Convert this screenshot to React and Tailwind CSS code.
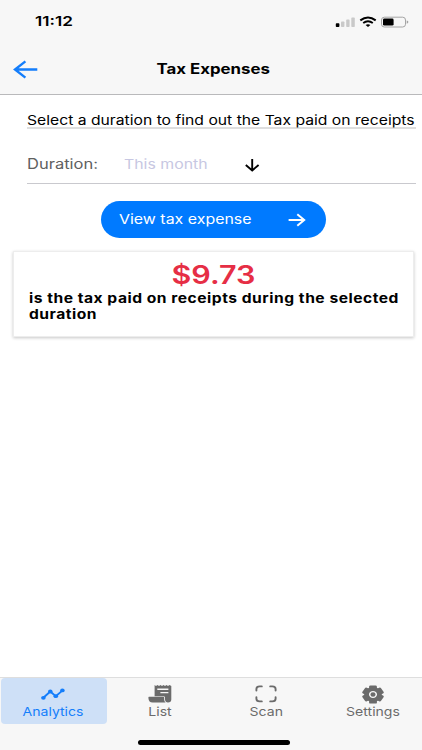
function StatusIcons() {
  return (
    <svg width="74" height="14" viewBox="0 0 74 14" fill="none">
      <rect x="0.8" y="8.2" width="3.6" height="3.8" rx="0.8" fill="#000" />
      <rect x="6" y="6.4" width="3.4" height="5.6" rx="0.8" fill="#c9c9c9" />
      <rect x="11.2" y="4.6" width="3.4" height="7.4" rx="0.8" fill="#c9c9c9" />
      <rect x="16.3" y="2.6" width="3.5" height="9.4" rx="0.8" fill="#c9c9c9" />
      <path d="M25.3 5.4Q33 -0.2 40.7 5.4" stroke="#000" strokeWidth="2" />
      <path d="M28.2 8Q33 4.4 37.8 8" stroke="#000" strokeWidth="1.9" />
      <path d="M30.6 10Q33 8.4 35.4 10L33 12Z" fill="#000" />
      <rect x="46.5" y="2.2" width="24" height="9.8" rx="2.8" stroke="#a5a5a5" />
      <rect x="48" y="3.6" width="10.6" height="7" rx="1.4" fill="#000" />
      <path d="M71.7 5.6Q73.4 6 73.4 7.1T71.7 8.8Z" fill="#a5a5a5" />
    </svg>
  )
}

function AnalyticsIcon() {
  return (
    <svg width="24" height="12" viewBox="0 0 24 12" fill="currentColor">
      <path d="M2.3 9.8L9.3 3.5L14.8 8.2L21.6 2.4" fill="none" stroke="currentColor" strokeWidth="1.9" />
      <ellipse cx="2.4" cy="9.8" rx="2.3" ry="1.9" />
      <ellipse cx="9.3" cy="3.5" rx="2.3" ry="1.9" />
      <ellipse cx="14.8" cy="8.2" rx="2.3" ry="1.9" />
      <ellipse cx="21.4" cy="2.4" rx="2.3" ry="1.9" />
    </svg>
  )
}

function ReceiptIcon() {
  return (
    <svg width="24" height="18" viewBox="0 0 24 18" fill="currentColor">
      <path fillRule="evenodd" d="M6.6 0L8 1L9.5 0L11 1L12.5 0L14 1L15.5 0L17 1L18.5 0L20 1L21.5 0L23.3 1V14.5Q23.3 17.5 20 17.5Q17.2 17.5 17 14.5V12.6Q17 11.2 15.4 11.2H6.6ZM9.3 3.6V4.9H20.4V3.6ZM12.4 7V8.3H20.4V7Z" />
      <path d="M1 11.7H15.2Q16.2 11.7 16.2 12.8V14.8Q16.2 16.6 17.6 17.5H4.6Q0.7 17.5 0.4 13Q0.3 11.7 1 11.7Z" />
    </svg>
  )
}

function ScanIcon() {
  return (
    <svg width="22" height="18" viewBox="0 0 22 18" fill="none" stroke="currentColor" strokeWidth="1.9" strokeLinecap="round">
      <path d="M1.4 5.5V4Q1.4 1.4 4.6 1.4H6.8M15.2 1.4H17.4Q20.6 1.4 20.6 4V5.5M20.6 12.2V13.8Q20.6 16.4 17.4 16.4H15.2M6.8 16.4H4.6Q1.4 16.4 1.4 13.8V12.2" />
    </svg>
  )
}

function SettingsIcon() {
  return (
    <svg width="22" height="19" viewBox="0 0 22 19" fill="currentColor">
      <g transform="translate(11 9.5) scale(1.18 1)">
        <circle r="7.4" />
        <rect x="-3.3" y="-9.1" width="6.6" height="18.2" rx="1.2" />
        <rect x="-3.3" y="-9.1" width="6.6" height="18.2" rx="1.2" transform="rotate(60)" />
        <rect x="-3.3" y="-9.1" width="6.6" height="18.2" rx="1.2" transform="rotate(-60)" />
        <circle r="2.8" fill="none" stroke="#f7f7f7" strokeWidth="1.2" />
      </g>
    </svg>
  )
}

const tabs = [
  { icon: AnalyticsIcon, label: 'Analytics', active: true },
  { icon: ReceiptIcon, label: 'List' },
  { icon: ScanIcon, label: 'Scan' },
  { icon: SettingsIcon, label: 'Settings' },
]

export default function App() {
  return (
    <div className="flex h-[750px] w-[422px] flex-col overflow-hidden bg-white font-['Inter',sans-serif] text-black">
      <header className="h-[95px] border-b border-[#b9b9bb] bg-[#f7f7f7]">
        <div className="flex h-[43px] items-center justify-between pl-[35px] pr-[13px]">
          <span className="origin-left scale-x-[1.32] whitespace-nowrap text-[13px] font-semibold">11:12</span>
          <StatusIcons />
        </div>
        <div className="grid h-[51px] grid-cols-[60px_1fr_55px] items-center">
          <svg className="ml-[13px]" width="26" height="20" viewBox="0 0 26 20" fill="none" stroke="#147efb" strokeWidth="2.4">
            <path d="M2 10.5H24.3M12.4 2.4L2 10.5L12.4 18.6" />
          </svg>
          <h1 className="text-center text-[14px] font-bold">
            <span className="inline-block scale-x-[1.2] whitespace-nowrap">Tax Expenses</span>
          </h1>
        </div>
      </header>

      <main className="flex-1">
        <div className="ml-[27px] mr-[6px] mt-[15px] h-[19px] border-b-2 border-[#dedede] leading-[18px]">
          <span className="inline-block origin-left scale-x-[1.208] whitespace-nowrap text-[13px]">Select a duration to find out the Tax paid on receipts</span>
        </div>
        <div className="ml-[27px] mr-[6px] flex h-[55px] items-center border-b border-[#c9c9ce] pt-[14px]">
          <span className="w-[97px] shrink-0"><span className="inline-block origin-left scale-x-[1.18] whitespace-nowrap text-[14px] text-[#606060]">Duration:</span></span>
          <span className="w-[121px] shrink-0"><span className="inline-block origin-left scale-x-[1.22] whitespace-nowrap text-[13px] text-[#c7c7e2]">This month</span></span>
          <svg className="mt-[3px]" width="15" height="14" viewBox="0 0 15 14" fill="none" stroke="#000" strokeWidth="1.9">
            <path d="M7.2 1V12.4M0.8 7L7.2 12.4L13.6 7" />
          </svg>
        </div>
        <button className="ml-[101px] mt-[17px] flex h-[37px] w-[225px] items-center justify-between rounded-full bg-[#007aff] pl-[18px] pr-[20px] text-white">
          <span className="origin-left scale-x-[1.18] whitespace-nowrap text-[13.5px]">View tax expense</span>
          <svg width="18" height="14" viewBox="0 0 18 14" fill="none" stroke="currentColor" strokeWidth="2">
            <path d="M0.6 7H16M9.3 1.2L16.2 7L9.3 12.8" />
          </svg>
        </button>
        <section className="ml-[13px] mr-[8px] mt-[13px] h-[86px] border border-[#ededed] bg-white px-[15px] pt-[9px] shadow-[0_1px_3px_rgba(0,0,0,0.22)]">
          <div className="pr-px text-center text-[25px] font-semibold leading-[28px] text-[#e62e45]">
            <span className="inline-block scale-x-[1.22] whitespace-nowrap">$9.73</span>
          </div>
          <p className="mt-px origin-left scale-x-[1.2] whitespace-nowrap text-[13px] font-bold leading-[16px] tracking-[0.43px]">
            is the tax paid on receipts during the selected<br />duration
          </p>
        </section>
      </main>

      <nav className="h-[73px] border-t border-[#dedede] bg-[#f7f7f7]">
        <div className="grid grid-cols-[repeat(4,106.5px)]">
          {tabs.map(({ icon: Icon, label, active }) => (
            <a key={label}
              className={`ml-px flex h-[46px] flex-col items-center rounded-[4px] ${active ? 'bg-[#cee0f7] text-[#147efb]' : 'text-[#6b6b6b]'}`}>
              <span className="mr-px mt-[6px] flex h-[20px] items-center"><Icon /></span>
              <span className="mr-px scale-x-[1.17] whitespace-nowrap text-[12px] leading-[16px]">{label}</span>
            </a>
          ))}
        </div>
        <div className="ml-[138px] mt-[16px] h-[5px] w-[152px] rounded-full bg-black" />
      </nav>
    </div>
  )
}
